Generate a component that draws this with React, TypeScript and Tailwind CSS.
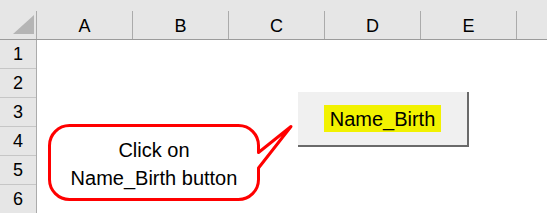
import React from 'react'

const COLS = ['A', 'B', 'C', 'D', 'E']
const ROWS = [1, 2, 3, 4, 5, 6]

function Callout() {
  return (
    <div className="absolute left-0 top-0 w-[547px] h-[213px] pointer-events-none">
      <svg width="547" height="213" className="absolute left-0 top-0">
        <path
          d="M 69.5 125.5 H 238.5 A 20 20 0 0 1 258.5 145.5 V 152.5 L 291 126.5 L 258.5 168 V 179.5 A 20 20 0 0 1 238.5 199.5 H 69.5 A 20 20 0 0 1 49.5 179.5 V 145.5 A 20 20 0 0 1 69.5 125.5 Z"
          fill="#ffffff"
          stroke="#ff0000"
          strokeWidth="3"
          strokeLinejoin="round"
        />
      </svg>
      <div className="absolute left-[50px] top-[136px] w-[208px] text-center text-[20px] leading-[28px] text-black font-['Liberation_Sans',Arial,sans-serif]">
        <p>Click on</p>
        <p>Name_Birth button</p>
      </div>
    </div>
  )
}

export default function App() {
  return (
    <div className="relative w-[547px] h-[213px] overflow-hidden bg-white font-['Liberation_Sans',Arial,sans-serif] text-black">
      {/* column header */}
      <div className="flex h-[40px] bg-[#e6e6e6] border-b border-[#9b9b9b] items-end">
        <div className="relative w-[37px] h-[28px] shrink-0 border-r border-[#ababab]">
          <svg width="36" height="28" className="absolute left-0 top-0">
            <polygon points="13,23 34,23 34,4" fill="#b5b5b5" />
          </svg>
        </div>
        {COLS.map(c => (
          <div
            key={c}
            className="w-[96px] h-[28px] shrink-0 border-r border-[#ababab] flex items-center justify-center text-[18px] leading-none pt-[1px]"
          >
            {c}
          </div>
        ))}
        <div className="flex-1 h-[28px]" />
      </div>

      {/* rows */}
      <div className="flex">
        <div className="w-[37px] shrink-0 bg-[#e6e6e6] border-r border-[#ababab]">
          {ROWS.map(r => (
            <div
              key={r}
              className="h-[29px] border-b border-[#c6c6c6] flex items-center justify-center text-[18px] leading-none"
            >
              {r}
            </div>
          ))}
        </div>
        <div className="flex-1 bg-white" />
      </div>

      {/* form button */}
      <div className="absolute left-[298px] top-[92px] w-[171px] h-[55px] bg-[#f0f0f0] border-r-2 border-b-2 border-[#6a6a6a] flex items-center justify-center">
        <span className="bg-[#f2f200] px-[6px] h-[27px] flex items-center text-[20px] leading-none">Name_Birth</span>
      </div>

      <Callout />
    </div>
  )
}
